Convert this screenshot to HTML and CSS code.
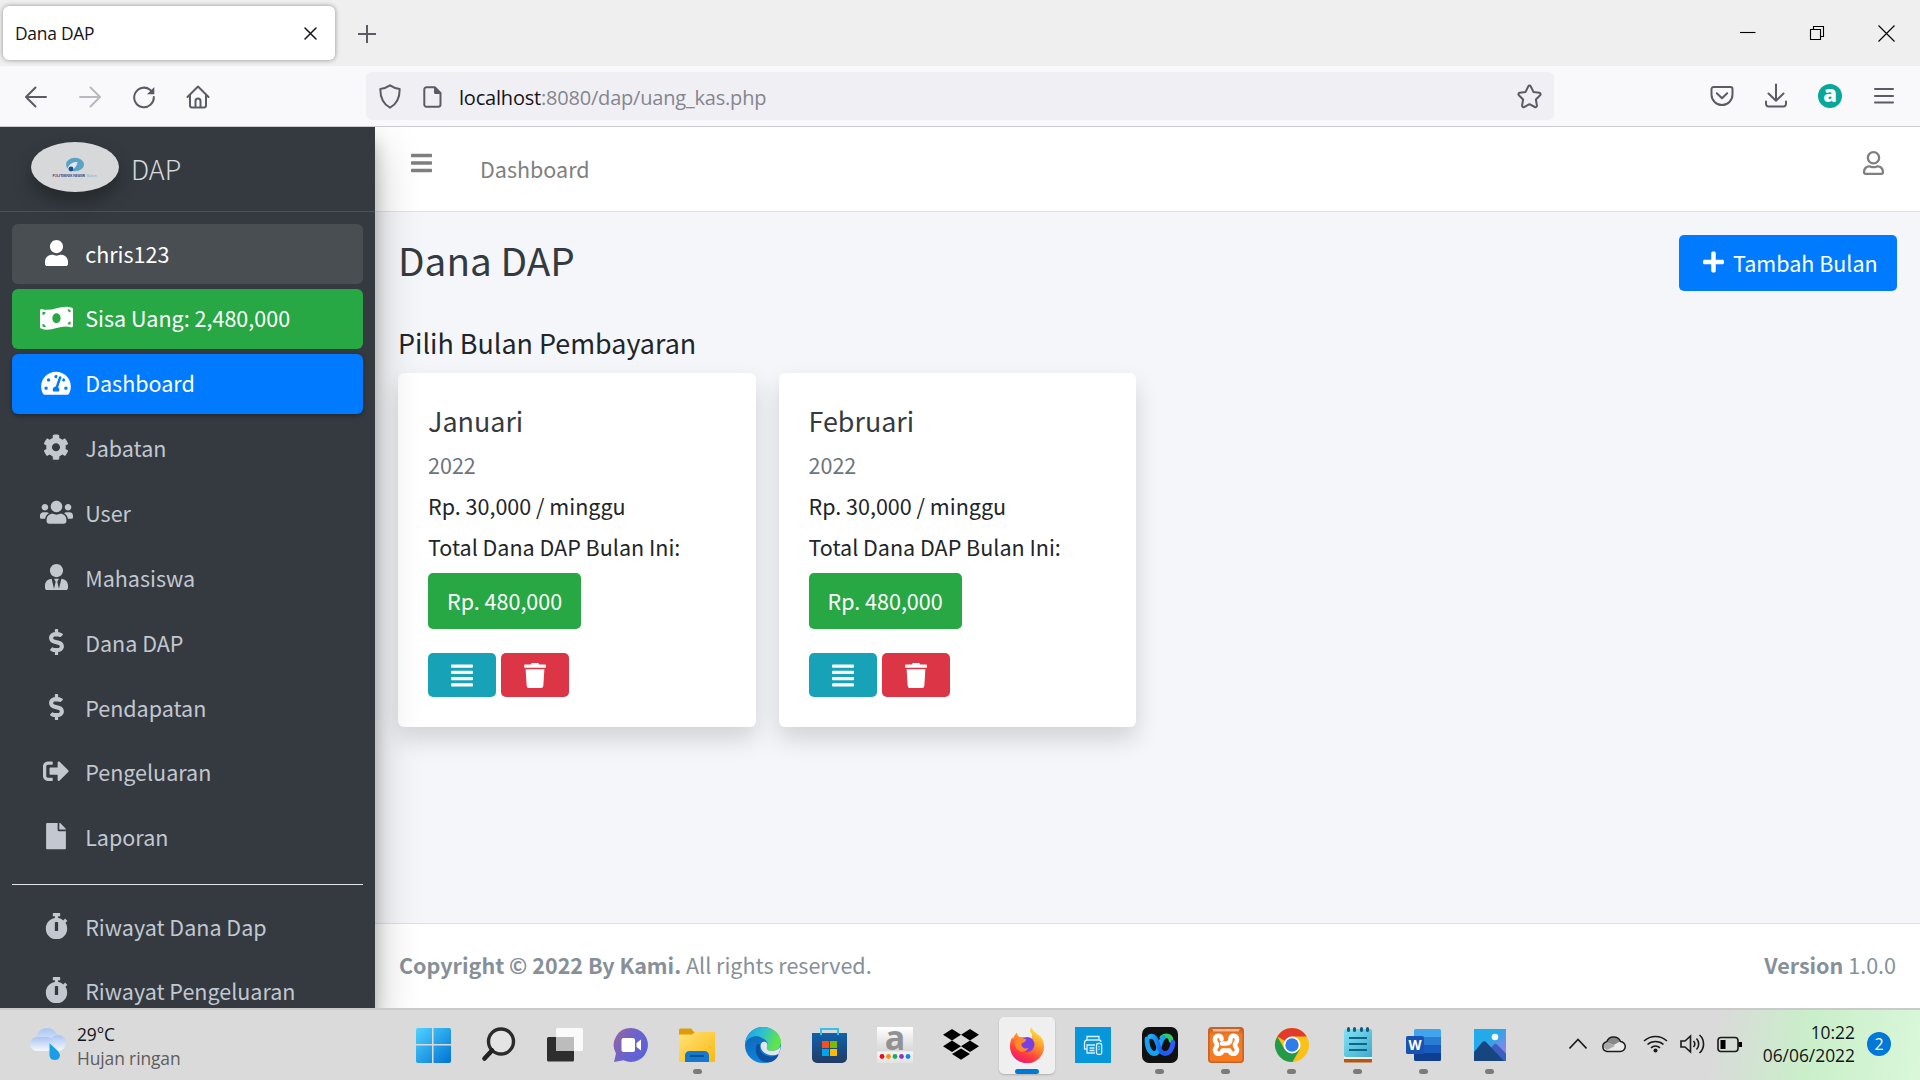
FILE: index.html
```html
<!DOCTYPE html>
<html lang="id">
<head>
<meta charset="utf-8">
<title>Dana DAP</title>
<link rel="stylesheet" href="styles.css">
</head>
<body>
<svg class="defs" aria-hidden="true">
  <defs>
    <symbol id="i-user" viewBox="0 0 448 512"><path d="M224 256c70.7 0 128-57.3 128-128S294.7 0 224 0 96 57.3 96 128s57.3 128 128 128zm89.6 32h-16.7c-22.2 10.2-46.9 16-72.9 16s-50.6-5.8-72.9-16h-16.7C60.2 288 0 348.2 0 422.4V464c0 26.5 21.5 48 48 48h352c26.5 0 48-21.5 48-48v-41.6c0-74.2-60.2-134.4-134.4-134.4z"/></symbol>
    <symbol id="i-money" viewBox="0 0 640 512"><path d="M621.16 54.46C582.37 38.19 543.55 32 504.75 32c-123.17-.01-246.33 62.34-369.5 62.34-30.89 0-61.76-3.92-92.65-13.72-3.47-1.1-6.95-1.62-10.35-1.62C15.04 79 0 92.32 0 110.81v317.26c0 12.63 7.23 24.6 18.84 29.46C57.63 473.81 96.45 480 135.25 480c123.17 0 246.34-62.35 369.51-62.35 30.89 0 61.76 3.92 92.65 13.72 3.47 1.1 6.95 1.62 10.35 1.62 17.21 0 32.25-13.32 32.25-31.81V83.93c-.01-12.64-7.24-24.6-18.85-29.47zM48 132.22c20.12 5.04 41.12 7.57 62.72 8.93C104.84 170.54 79 192.69 48 192.69v-60.47zm0 285v-47.78c34.37 0 62.18 27.27 63.71 61.4-22.53-1.81-43.59-6.31-63.71-13.62zM320 352c-44.19 0-80-42.99-80-96 0-53.02 35.82-96 80-96s80 42.98 80 96c0 53.03-35.83 96-80 96zm272 27.78c-17.52-4.39-35.71-6.85-54.32-8.44 5.87-26.08 27.5-45.88 54.32-49.28v57.72zm0-236.11c-30.89-3.91-54.86-29.7-55.81-61.55 19.54 2.17 38.09 6.23 55.81 12.66v48.89z"/></symbol>
    <symbol id="i-gauge" viewBox="0 0 576 512"><path d="M288 32C128.94 32 0 160.94 0 320c0 52.8 14.25 102.26 39.06 144.8 5.61 9.62 16.3 15.2 27.44 15.2h443c11.14 0 21.83-5.58 27.44-15.2C561.75 422.26 576 372.8 576 320c0-159.06-128.94-288-288-288zm0 64c14.71 0 26.58 10.13 30.32 23.65-1.11 2.26-2.64 4.23-3.45 6.67l-9.22 27.67c-5.13 3.49-10.97 6.01-17.64 6.01-17.67 0-32-14.33-32-32S270.33 96 288 96zM96 384c-17.67 0-32-14.33-32-32s14.33-32 32-32 32 14.33 32 32-14.33 32-32 32zm48-160c-17.67 0-32-14.33-32-32s14.33-32 32-32 32 14.33 32 32-14.33 32-32 32zm246.77-72.41l-61.33 184C343.13 347.33 352 364.54 352 384c0 11.72-3.38 22.55-8.88 32H232.88c-5.5-9.45-8.88-20.28-8.88-32 0-33.94 26.5-61.43 59.9-63.59l61.34-184.01c4.17-12.56 17.73-19.45 30.36-15.17 12.57 4.19 19.35 17.79 15.17 30.36zm14.66 57.2l15.52-46.55c3.47-1.29 7.13-2.23 11.05-2.23 17.67 0 32 14.33 32 32s-14.33 32-32 32c-11.38-.01-20.89-6.28-26.57-15.22zM480 384c-17.67 0-32-14.33-32-32s14.33-32 32-32 32 14.33 32 32-14.33 32-32 32z"/></symbol>
    <symbol id="i-cog" viewBox="0 0 512 512"><path d="M487.4 315.7l-42.6-24.6c4.3-23.2 4.3-47 0-70.2l42.6-24.6c4.9-2.8 7.1-8.6 5.5-14-11.1-35.6-30-67.8-54.7-94.6-3.8-4.1-10-5.1-14.8-2.3L380.8 110c-17.9-15.4-38.5-27.3-60.8-35.1V25.8c0-5.6-3.9-10.5-9.4-11.7-36.7-8.2-74.3-7.8-109.2 0-5.5 1.2-9.4 6.1-9.4 11.7V75c-22.2 7.9-42.8 19.8-60.8 35.1L88.7 85.5c-4.9-2.8-11-1.9-14.8 2.3-24.7 26.7-43.6 58.9-54.7 94.6-1.7 5.4.6 11.2 5.5 14L67.3 221c-4.3 23.2-4.3 47 0 70.2l-42.6 24.6c-4.9 2.8-7.1 8.6-5.5 14 11.1 35.6 30 67.8 54.7 94.6 3.8 4.1 10 5.1 14.8 2.3l42.6-24.6c17.9 15.4 38.5 27.3 60.8 35.1v49.2c0 5.6 3.9 10.5 9.4 11.7 36.7 8.2 74.3 7.8 109.2 0 5.5-1.2 9.4-6.1 9.4-11.7v-49.2c22.2-7.9 42.8-19.8 60.8-35.1l42.6 24.6c4.9 2.8 11 1.9 14.8-2.3 24.7-26.7 43.6-58.9 54.7-94.6 1.5-5.5-.7-11.3-5.6-14.1zM256 336c-44.1 0-80-35.9-80-80s35.9-80 80-80 80 35.9 80 80-35.9 80-80 80z"/></symbol>
    <symbol id="i-users" viewBox="0 0 640 512"><path d="M96 224c35.3 0 64-28.7 64-64s-28.7-64-64-64-64 28.7-64 64 28.7 64 64 64zm448 0c35.3 0 64-28.7 64-64s-28.7-64-64-64-64 28.7-64 64 28.7 64 64 64zm32 32h-64c-17.6 0-33.5 7.1-45.1 18.6 40.3 22.1 68.9 62 75.1 109.4h66c17.7 0 32-14.3 32-32v-32c0-35.3-28.7-64-64-64zm-256 0c61.9 0 112-50.1 112-112S381.9 32 320 32 208 82.1 208 144s50.1 112 112 112zm76.8 32h-8.3c-20.8 10-43.9 16-68.5 16s-47.6-6-68.5-16h-8.3C179.6 288 128 339.6 128 403.2V432c0 26.5 21.5 48 48 48h288c26.5 0 48-21.5 48-48v-28.8c0-63.6-51.6-115.2-115.2-115.2zm-223.7-13.4C161.5 263.1 145.6 256 128 256H64c-35.3 0-64 28.7-64 64v32c0 17.7 14.3 32 32 32h65.9c6.3-47.4 34.9-87.3 75.2-109.4z"/></symbol>
    <symbol id="i-tie" viewBox="0 0 448 512"><path d="M224 256c70.7 0 128-57.3 128-128S294.7 0 224 0 96 57.3 96 128s57.3 128 128 128zm95.8 32.6L272 480l-32-136 32-56h-96l32 56-32 136-47.8-191.4C56.9 292 0 350.3 0 422.4V464c0 26.5 21.5 48 48 48h352c26.5 0 48-21.5 48-48v-41.6c0-72.1-56.9-130.4-128.2-133.8z"/></symbol>
    <symbol id="i-dollar" viewBox="0 0 288 512"><path d="M209.2 233.4l-108-31.6C88.7 198.2 80 186.5 80 173.5c0-16.3 13.2-29.5 29.5-29.5h66.3c12.2 0 24.2 3.7 34.2 10.5 6.1 4.1 14.3 3.1 19.5-2l34.8-34c7.1-6.9 6.1-18.4-1.8-24.5C238 74.8 207.4 64.1 176 64V16c0-8.8-7.2-16-16-16h-32c-8.8 0-16 7.2-16 16v48h-2.5C45.8 64-5.4 118.7.5 183.6c4.2 46.1 39.4 83.6 83.8 96.6l102.5 30c12.5 3.7 21.2 15.3 21.2 28.3 0 16.3-13.2 29.5-29.5 29.5h-66.3C100 368 88 364.3 78 357.5c-6.1-4.1-14.3-3.1-19.5 2l-34.8 34c-7.1 6.9-6.1 18.4 1.8 24.5 24.5 19.2 55.1 29.9 86.5 30v48c0 8.8 7.2 16 16 16h32c8.8 0 16-7.2 16-16v-48.2c46.6-.9 90.3-28.6 105.7-72.7 21.5-61.6-14.6-124.8-72.5-141.7z"/></symbol>
    <symbol id="i-out" viewBox="0 0 512 512"><path d="M497 273L329 441c-15 15-41 4.5-41-17v-96H152c-13.3 0-24-10.7-24-24v-96c0-13.3 10.7-24 24-24h136V88c0-21.4 25.9-32 41-17l168 168c9.3 9.4 9.3 24.6 0 34zM192 436v-40c0-6.6-5.4-12-12-12H96c-17.7 0-32-14.3-32-32V160c0-17.7 14.3-32 32-32h84c6.6 0 12-5.4 12-12V76c0-6.6-5.4-12-12-12H96c-53 0-96 43-96 96v192c0 53 43 96 96 96h84c6.6 0 12-5.4 12-12z"/></symbol>
    <symbol id="i-file" viewBox="0 0 384 512"><path d="M224 136V0H24C10.7 0 0 10.7 0 24v464c0 13.3 10.7 24 24 24h336c13.3 0 24-10.7 24-24V160H248c-13.2 0-24-10.8-24-24zm160-14.1v6.1H256V0h6.1c6.4 0 12.5 2.5 17 7l97.9 98c4.5 4.5 7 10.6 7 16.9z"/></symbol>
    <symbol id="i-watch" viewBox="0 0 448 512"><path d="M432 304c0 114.9-93.1 208-208 208S16 418.9 16 304c0-104 76.3-190.2 176-205.5V64h-28c-6.6 0-12-5.4-12-12V12c0-6.6 5.4-12 12-12h120c6.6 0 12 5.4 12 12v40c0 6.6-5.4 12-12 12h-28v34.5c37.5 5.8 71.7 21.6 99.7 44.6l27.5-27.5c4.7-4.7 12.3-4.7 17 0l28.3 28.3c4.7 4.7 4.7 12.3 0 17l-29.4 29.4-.6.6C419.7 223.3 432 262.2 432 304zm-176 36V188.500c0-6.600-5.400-12-12-12h-40c-6.600 0-12 5.400-12 12V340c0 6.600 5.400 12 12 12h40c6.600 0 12-5.400 12-12z"/></symbol>
    <symbol id="i-plus" viewBox="0 0 448 512"><path d="M416 208H272V64c0-17.67-14.33-32-32-32h-32c-17.67 0-32 14.33-32 32v144H32c-17.67 0-32 14.33-32 32v32c0 17.67 14.33 32 32 32h144v144c0 17.67 14.33 32 32 32h32c17.67 0 32-14.33 32-32V304h144c17.67 0 32-14.33 32-32v-32c0-17.67-14.33-32-32-32z"/></symbol>
    <symbol id="i-lines" viewBox="0 0 448 512"><rect y="32" width="448" height="64" rx="16"/><rect y="160" width="448" height="64" rx="16"/><rect y="288" width="448" height="64" rx="16"/><rect y="416" width="448" height="64" rx="16"/></symbol>
    <symbol id="i-trash" viewBox="0 0 448 512"><path d="M432 32H312l-9.4-18.7A24 24 0 0 0 281.1 0H166.8a23.72 23.72 0 0 0-21.4 13.3L136 32H16A16 16 0 0 0 0 48v32a16 16 0 0 0 16 16h416a16 16 0 0 0 16-16V48a16 16 0 0 0-16-16zM53.2 467a48 48 0 0 0 47.9 45h245.8a48 48 0 0 0 47.9-45L416 128H32z"/></symbol>
    <symbol id="i-bars" viewBox="0 0 448 512"><rect y="60" width="448" height="72" rx="16"/><rect y="220" width="448" height="72" rx="16"/><rect y="380" width="448" height="72" rx="16"/></symbol>
    <symbol id="i-user-o" viewBox="0 0 448 512"><path d="M313.6 304c-28.7 0-42.5 16-89.6 16-47.1 0-60.8-16-89.6-16C60.2 304 0 364.2 0 438.4V464c0 26.5 21.5 48 48 48h352c26.5 0 48-21.5 48-48v-25.6c0-74.2-60.2-134.4-134.4-134.4zM400 464H48v-25.6c0-47.6 38.8-86.4 86.4-86.4 14.6 0 38.3 16 89.6 16 51.7 0 74.9-16 89.6-16 47.6 0 86.4 38.8 86.4 86.4V464zM224 288c79.5 0 144-64.5 144-144S303.5 0 224 0 80 64.5 80 144s64.5 144 144 144zm0-240c52.9 0 96 43.1 96 96s-43.1 96-96 96-96-43.1-96-96 43.1-96 96-96z"/></symbol>
    <linearGradient id="g-win" x1="0" y1="0" x2="1" y2="1"><stop offset="0" stop-color="#4fd3ff"/><stop offset="1" stop-color="#0072d4"/></linearGradient>
    <linearGradient id="g-chat" x1="0" y1=".2" x2="1" y2=".8"><stop offset="0" stop-color="#9263a3"/><stop offset=".5" stop-color="#6a63cf"/><stop offset="1" stop-color="#5a62d8"/></linearGradient>
    <linearGradient id="g-folder" x1="0" y1="0" x2="1" y2="1"><stop offset="0" stop-color="#ffe27a"/><stop offset="1" stop-color="#fcb90f"/></linearGradient>
    <linearGradient id="g-edge" x1="0" y1="0" x2="1" y2=".3"><stop offset="0" stop-color="#1e9ce8"/><stop offset=".5" stop-color="#2bc0d4"/><stop offset="1" stop-color="#62e545"/></linearGradient>
    <linearGradient id="g-edge2" x1="0" y1="0" x2=".4" y2="1"><stop offset="0" stop-color="#125fae"/><stop offset="1" stop-color="#0b86e0"/></linearGradient>
    <linearGradient id="g-store" x1="0" y1="0" x2="0" y2="1"><stop offset="0" stop-color="#0f62ac"/><stop offset="1" stop-color="#233a63"/></linearGradient>
    <linearGradient id="g-fox" x1=".8" y1="0" x2=".3" y2="1"><stop offset="0" stop-color="#fff04a"/><stop offset=".4" stop-color="#ff9a2a"/><stop offset=".75" stop-color="#ff3c3f"/><stop offset="1" stop-color="#e8187d"/></linearGradient>
    <linearGradient id="g-webex" x1="0" y1="0" x2="1" y2="0"><stop offset="0" stop-color="#18b5f5"/><stop offset=".5" stop-color="#1f5bf0"/><stop offset="1" stop-color="#2a5bff"/></linearGradient>
    <linearGradient id="g-note" x1="0" y1="0" x2="1" y2="1"><stop offset="0" stop-color="#83e3f5"/><stop offset="1" stop-color="#3eaaca"/></linearGradient>
    <linearGradient id="g-photo" x1="0" y1="0" x2="1" y2="1"><stop offset=".4" stop-color="#23aaea"/><stop offset=".8" stop-color="#8b83e6"/></linearGradient>
    <linearGradient id="g-xampp" x1="0" y1="0" x2="0" y2="1"><stop offset="0" stop-color="#c05a1c"/><stop offset=".2" stop-color="#f27a26"/><stop offset="1" stop-color="#f87a1e"/></linearGradient>
    <linearGradient id="g-cloud" x1="0" y1="0" x2="0" y2="1"><stop offset="0" stop-color="#a9c5f2"/><stop offset="1" stop-color="#f4f8fd"/></linearGradient>
    <linearGradient id="g-amz" x1="0" y1="0" x2="0" y2="1"><stop offset="0" stop-color="#fff"/><stop offset=".65" stop-color="#d8d8d8"/><stop offset=".7" stop-color="#f3f3f3"/><stop offset="1" stop-color="#e2e2e2"/></linearGradient>
  </defs>
</svg>

<header class="tabstrip">
  <div class="tab">
    <span>Dana DAP</span>
    <svg width="13" height="13" viewBox="0 0 13 13" class="stroke dark"><path d="M1 1l11 11M12 1L1 12"/></svg>
  </div>
  <svg class="newtab stroke" width="18" height="18" viewBox="0 0 18 18"><path d="M9 0v18M0 9h18"/></svg>
  <div class="winctl">
    <svg width="16" height="16" viewBox="0 0 16 16"><path d="M0 7.500h15.500"/></svg>
    <svg width="16" height="16" viewBox="0 0 16 16"><path d="M1.500 4.500h10v10h-10zM4.500 4.500v-3h10v10h-3"/></svg>
    <svg width="17" height="17" viewBox="0 0 17 17"><path d="M.5.5l16 16M16.500.5l-16 16"/></svg>
  </div>
</header>

<nav class="toolbar">
  <div class="navbtns">
    <svg class="stroke" width="24" height="24" viewBox="0 0 24 24"><path d="M22 12H2.500M11.500 2.500L2 12l9.500 9.500"/></svg>
    <svg class="stroke faded" width="24" height="24" viewBox="0 0 24 24"><path d="M2 12h19.500M12.500 2.500L22 12l-9.500 9.500"/></svg>
    <svg class="stroke" width="24" height="24" viewBox="0 0 24 24"><path d="M21.800 12A9.800 9.800 0 1 1 18 4.700L20 7"/><path d="M22.300 2v7.300h-7.300z" fill="#5b5b66" stroke="none"/></svg>
    <svg class="stroke" width="24" height="24" viewBox="0 0 24 24"><path d="M1.500 12L12 1.500 22.500 12M4 10v10.500a2 2 0 0 0 2 2h12a2 2 0 0 0 2-2V10M9.500 22v-6a2.500 2.500 0 0 1 5 0v6"/></svg>
  </div>
  <div class="urlbar">
    <svg class="stroke" width="22" height="25" viewBox="0 0 22 25"><path d="M11 1.300c3 2 6 3.200 9.700 3.700 0 8-1.700 14.500-9.700 18.700C3 19.500 1.300 13 1.300 5 5 4.500 8 3.300 11 1.300z"/></svg>
    <svg class="stroke doc" width="19" height="22" viewBox="0 0 19 22"><path d="M3.500 1.200h8.300l5.700 5.700v11.400a2.500 2.500 0 0 1-2.500 2.500H3.500A2.200 2.200 0 0 1 1.300 18.500v-15A2.200 2.200 0 0 1 3.500 1.200z"/><path d="M11 1l7 7h-5.500A1.500 1.500 0 0 1 11 6.500z" fill="#5b5b66" stroke="none"/></svg>
    <span class="url"><b>localhost</b>:8080/dap/uang_kas.php</span>
    <svg class="stroke" width="25" height="25" viewBox="0 0 25 25"><path d="M12.500 1.600c.6 0 1 .3 1.300.9l2.600 5.400 5.900.9c1.300.2 1.700 1.600.8 2.500l-4.200 4.200 1 6c.2 1.300-1 2.100-2.100 1.500l-5.300-2.800L7.200 23c-1.100.6-2.300-.2-2.100-1.500l1-6-4.200-4.200c-.9-.9-.5-2.300.8-2.500l5.900-.9 2.600-5.400c.3-.6.7-.9 1.300-.9z"/></svg>
  </div>
  <div class="tools">
    <svg class="stroke" width="24" height="22" viewBox="0 0 24 22"><path d="M3.500 2h17a2 2 0 0 1 2 2v5.500a10.500 10.500 0 0 1-21 0V4a2 2 0 0 1 2-2zM6.800 8.300l5.200 5 5.200-5"/></svg>
    <svg class="stroke" width="24" height="26" viewBox="0 0 24 26"><path d="M12 1.500v16M4.500 10.500L12 17.800l7.500-7.300M2 18.500v2.500a2.500 2.500 0 0 0 2.500 2.500h15a2.500 2.500 0 0 0 2.500-2.500v-2.500"/></svg>
    <span class="ext">a</span>
    <svg class="stroke" width="20" height="18" viewBox="0 0 20 18"><path d="M1 2h18M1 9h18M1 15.500h18"/></svg>
  </div>
</nav>

<main class="page">
  <aside class="sidebar">
    <div class="brand">
      <svg class="logo" width="88" height="50" viewBox="0 0 88 50">
        <ellipse cx="44" cy="25" rx="44" ry="25" fill="#d7d8da"/>
        <ellipse cx="44" cy="22.500" rx="9" ry="6.700" fill="#5aa3c6"/>
        <path d="M37 25.500c1-3.500 5-5.500 9.500-5.500-.5 4-3.500 8-7.500 8.500z" fill="#dfe6ec"/><circle cx="40" cy="27" r="2.400" fill="#1f4c92"/>
        <text x="21.500" y="35" font-size="3.600" font-weight="700" fill="#27417f" textLength="33" lengthAdjust="spacingAndGlyphs">P<tspan fill="#d04040">O</tspan>LITEKNIK NEGERI</text>
        <text x="56" y="35" font-size="3.400" fill="#6fb6d4" textLength="10" lengthAdjust="spacingAndGlyphs">Batam</text>
      </svg>
      <span>DAP</span>
    </div>
    <ul class="menu">
      <li class="user"><i><svg style="width:23px"><use href="#i-user"/></svg></i><span>chris123</span></li>
      <li class="cash"><i><svg style="width:33px"><use href="#i-money"/></svg></i><span>Sisa Uang: 2,480,000</span></li>
      <li class="active"><i><svg style="width:30px"><use href="#i-gauge"/></svg></i><span>Dashboard</span></li>
      <li><i><svg style="width:26px"><use href="#i-cog"/></svg></i><span>Jabatan</span></li>
      <li><i><svg style="width:33px"><use href="#i-users"/></svg></i><span>User</span></li>
      <li><i><svg style="width:23px"><use href="#i-tie"/></svg></i><span>Mahasiswa</span></li>
      <li><i><svg style="width:15px"><use href="#i-dollar"/></svg></i><span>Dana DAP</span></li>
      <li><i><svg style="width:15px"><use href="#i-dollar"/></svg></i><span>Pendapatan</span></li>
      <li><i><svg style="width:26px"><use href="#i-out"/></svg></i><span>Pengeluaran</span></li>
      <li><i><svg style="width:20px"><use href="#i-file"/></svg></i><span>Laporan</span></li>
      <li class="rule"></li>
      <li><i><svg style="width:23px"><use href="#i-watch"/></svg></i><span>Riwayat Dana Dap</span></li>
      <li class="last"><i><svg style="width:23px"><use href="#i-watch"/></svg></i><span>Riwayat Pengeluaran</span></li>
    </ul>
  </aside>

  <div class="content">
    <div class="topnav">
      <svg class="burger"><use href="#i-bars"/></svg>
      <a>Dashboard</a>
      <svg class="profile"><use href="#i-user-o"/></svg>
    </div>
    <section class="body">
      <div class="headrow">
        <h1>Dana DAP</h1>
        <button class="btn add"><svg><use href="#i-plus"/></svg><span>Tambah Bulan</span></button>
      </div>
      <h5 class="sub">Pilih Bulan Pembayaran</h5>
      <div class="cards">
        <article class="card">
          <h5>Januari</h5>
          <h6 class="muted">2022</h6>
          <h6>Rp. 30,000 / minggu</h6>
          <h6>Total Dana DAP Bulan Ini:</h6>
          <button class="btn total"><span>Rp. 480,000</span></button>
          <div class="acts">
            <button class="sm info"><svg><use href="#i-lines"/></svg></button>
            <button class="sm danger"><svg><use href="#i-trash"/></svg></button>
          </div>
        </article>
        <article class="card">
          <h5>Februari</h5>
          <h6 class="muted">2022</h6>
          <h6>Rp. 30,000 / minggu</h6>
          <h6>Total Dana DAP Bulan Ini:</h6>
          <button class="btn total"><span>Rp. 480,000</span></button>
          <div class="acts">
            <button class="sm info"><svg><use href="#i-lines"/></svg></button>
            <button class="sm danger"><svg><use href="#i-trash"/></svg></button>
          </div>
        </article>
      </div>
    </section>
    <footer class="foot">
      <div><b>Copyright © 2022 By Kami.</b> All rights reserved.</div>
      <div><b>Version</b> 1.0.0</div>
    </footer>
  </div>
</main>

<footer class="taskbar">
  <div class="weather">
    <svg width="38" height="36" viewBox="0 0 38 36"><circle cx="18" cy="12" r="11" fill="url(#g-cloud)"/><circle cx="29" cy="16" r="8" fill="url(#g-cloud)"/><rect x="1" y="10" width="24" height="14" rx="7" fill="url(#g-cloud)"/><path d="M20.500 16c2 3 10.500 8 10.500 12.500a5.300 5.300 0 0 1-10.500 0z" fill="#1a9fe6"/></svg>
    <div><p>29°C</p><p class="dim">Hujan ringan</p></div>
  </div>
  <div class="apps">
    <span><svg viewBox="0 0 36 36"><path d="M1 3a2 2 0 0 1 2-2h14v16H1zM18.500 1H34a2 2 0 0 1 2 2v14H18.500zM1 18.500h16V36H3a2 2 0 0 1-2-2zM18.500 18.500H36V34a2 2 0 0 1-2 2H18.500z" fill="url(#g-win)"/></svg></span>
    <span><svg viewBox="0 0 36 36"><circle cx="20" cy="14.500" r="12.500" fill="#e4e4e4" stroke="#2b2b2b" stroke-width="3.400"/><path d="M11 23.500L3.500 31.500" stroke="#222" stroke-width="4.600" stroke-linecap="round"/></svg></span>
    <span><svg viewBox="0 0 36 36"><rect x="0" y="10" width="27" height="24.500" rx="1.500" fill="#2e2e2e"/><rect x="9" y="1" width="27" height="23" rx="1.500" fill="#fafafa"/><path d="M9 10h18v14H9z" fill="#bcbcbc"/></svg></span>
    <span><svg viewBox="0 0 36 36"><path d="M18 1a17 17 0 1 1-7.500 32.300L1 35l2-8.500A17 17 0 0 1 18 1z" fill="url(#g-chat)"/><rect x="8.500" y="11" width="13.500" height="14" rx="2" fill="#fff"/><path d="M23.500 16l4.500-3.500v11L23.500 20z" fill="#fff"/></svg></span>
    <span class="run"><svg viewBox="0 0 36 36"><path d="M0 3a1.500 1.500 0 0 1 1.500-1.500H12l3 3.500h20a1 1 0 0 1 1 1v6H0z" fill="#dc9b07"/><path d="M0 7.500h13l3-2.500h20v28.500a1.500 1.500 0 0 1-1.500 1.500h-33A1.500 1.500 0 0 1 0 33.500z" fill="url(#g-folder)"/><path d="M6 35v-6.500a4.500 4.500 0 0 1 4.500-4.500h15a4.500 4.500 0 0 1 4.500 4.500V35z" fill="#1478cc"/><path d="M11 29h14" stroke="#0b4f96" stroke-width="2"/></svg></span>
    <span><svg viewBox="0 0 36 36"><circle cx="18" cy="18" r="18" fill="url(#g-edge2)"/><path d="M0 16.500C1.500 7 8.500 0 18 0c10 0 18 7 18 15 0 6-4.500 9-10 9-3.500 0-5.500-1.500-4-4 2.500-4.500-1.500-8-8-10.500C8 8.500 3 11 0 16.500z" fill="url(#g-edge)"/><path d="M12 17c-4 8 2 18.500 11 18.500 5 0 9.500-4 10.500-8-6 3.500-15 2.500-18-4-1-2-.5-4 .5-6z" fill="#0d50a0"/><path d="M22 20c-.8 2.800 1 4 4 4 4 0 7.500-1.500 9.500-4.500 0 3-1 5.500-2.200 7.500C27 30 16.500 27.500 15.500 19c0-3 2.500-5 5-4 2 .8 2.300 3 1.500 5z" fill="#e2e6ea"/></svg></span>
    <span><svg viewBox="0 0 36 36"><path d="M1 6h35v25a5 5 0 0 1-5 5H6a5 5 0 0 1-5-5z" fill="url(#g-store)"/><path d="M10 8V2h17v6" fill="none" stroke="#37c0ee" stroke-width="2"/><path d="M11 14h7v7h-7z" fill="#f25022"/><path d="M19 14h7v7h-7z" fill="#7fba00"/><path d="M11 22h7v7h-7z" fill="#00a4ef"/><path d="M19 22h7v7h-7z" fill="#ffb900"/></svg></span>
    <span><svg viewBox="0 0 36 36"><path d="M0 0h36v36H0z" fill="url(#g-amz)"/><text x="18" y="23" text-anchor="middle" class="glyph" font-size="34" fill="#929292">a</text><circle cx="5" cy="29.500" r="2.400" fill="#e8101c"/><circle cx="11.500" cy="29.500" r="2.400" fill="#f5921e"/><circle cx="18" cy="29.500" r="2.400" fill="#18ae58"/><circle cx="24.500" cy="29.500" r="2.400" fill="#8a35c8"/><circle cx="31" cy="29.500" r="2.400" fill="#1588e0"/></svg></span>
    <span><svg viewBox="0 0 36 36"><path d="M9 2l9 5.700-9 5.700-9-5.700zM27 2l9 5.700-9 5.700-9-5.700zM9 13.500l9 5.700-9 5.700-9-5.700zM27 13.500l9 5.700-9 5.700-9-5.700zM18 21.500l9 5.500-9 5.800L9 27z"/></svg></span>
    <span class="focus"><svg viewBox="0 0 36 36"><path d="M22.500 0c1 4 5 6 8.500 9 3 3 4 7 4 10.500A17 16.500 0 0 1 1 20c0-4 .5-7 2.500-10l.5 2.500C4.500 10 6 7 8 5.500c0 2 1 4 2.500 4.500h5c-1 1.500-2 3 0 4.500l4-2c4 0 5-5 1.500-8 0-2 .5-3.500 1.500-4.500z" fill="url(#g-fox)"/><circle cx="18" cy="17.500" r="7.500" fill="#7a3fe0"/><path d="M6 14c3-4 8-3.500 11.500-1.500-1.500 3-4 3.500-5 4-.5 4 3 6 7 4.500-2 4.500-9 5-12 .5C6 19 5.500 16.500 6 14z" fill="#ff8a2a"/></svg></span>
    <span><svg viewBox="0 0 36 36"><path d="M0 0h36v36H0z" fill="#0796d9"/><path d="M12 13v-3.500h12V13M11.500 22H9.500v-6c0-2 1-3 3-3H24c1.500 0 2 .8 2 2M20 18h-8v8h8M14.500 21h5M14.500 23.500h5" fill="none" stroke="#d9effa" stroke-width="1.300"/><rect x="21.500" y="16.500" width="5.200" height="10.800" rx="1.500" fill="none" stroke="#d9effa" stroke-width="1.300"/><path d="M24 19v5" stroke="#d9effa" stroke-dasharray="1.500 1"/></svg></span>
    <span class="run"><svg viewBox="0 0 36 36"><rect width="36" height="36" rx="7" fill="#111"/><path d="M20 10.500c3-2.500 9-2.500 9 3" fill="none" stroke="#35c964" stroke-width="4.800" stroke-linecap="round"/><path d="M5 12c0 10 3.500 14.500 7.500 14.500 5.500 0 4-12 9-16" fill="none" stroke="#15a1f2" stroke-width="4.800" stroke-linecap="round"/><path d="M8 9.500c3.500-1 6 2 7.500 7 1.500 6 4 10 7.500 10 4.500 0 7.500-5 8-11" fill="none" stroke="url(#g-webex)" stroke-width="4.800" stroke-linecap="round"/></svg></span>
    <span class="run"><svg viewBox="0 0 36 36"><rect x=".8" y=".8" width="34.400" height="34.400" rx="3" fill="url(#g-xampp)" stroke="#c46428" stroke-width="1.600"/><path d="M4 2h28l-1.500 2.500h-25z" fill="#f5b890"/><path d="M13.500 12c0-4.500-6.500-4.500-6.500.5 0 3 2 3.500 2 5.500s-2 3-2 5c0 5 6.500 5 7.500.5h7c1 4.500 7.500 4.500 7.500-.5 0-2-2-3-2-5s2-2.500 2-5.500c0-5-6.500-5-6.500-.5 0 3-1.500 4.500-4.500 4.500h-4" fill="none" stroke="#fff" stroke-width="4.600" stroke-linecap="round" stroke-linejoin="round"/></svg></span>
    <span class="run"><svg viewBox="0 0 36 36"><circle cx="18" cy="18" r="17" fill="#fbc116"/><path d="M18 18L3.300 9.500A17 17 0 0 1 32.700 9.500H18z" fill="#e23b2e"/><path d="M3.300 9.500A17 17 0 0 0 18.500 35l7.200-12.500L18 18 10.500 22z" fill="#229a48"/><circle cx="18" cy="18" r="8.500" fill="#fff"/><circle cx="18" cy="18" r="6.700" fill="#2f7de9"/></svg></span>
    <span class="run"><svg viewBox="0 0 36 36"><path d="M4 31h28v3.500a1 1 0 0 1-1 1H5a1 1 0 0 1-1-1z" fill="#b5570f"/><path d="M4 29h28v3H4z" fill="#f1f1f1"/><path d="M4 4a2 2 0 0 1 2-2h24a2 2 0 0 1 2 2v26H6a2 2 0 0 1-2-2z" fill="url(#g-note)"/><path d="M9 11h18M9 17h18M9 23h18" stroke="#0b6587" stroke-width="2"/><path d="M8.500 1.500v2M14.500 1.500v2M21.500 1.500v2M27.500 1.500v2" stroke="#0d5d80" stroke-width="3" stroke-linecap="round"/></svg></span>
    <span class="run"><svg viewBox="0 0 36 36"><path d="M8 3.500A1.500 1.500 0 0 1 9.500 2h24A1.500 1.500 0 0 1 35 3.500V10H8z" fill="#41a5ee"/><path d="M8 10h27v8H8z" fill="#2b7cd3"/><path d="M8 18h27v8H8z" fill="#185abd"/><path d="M8 26h27v6.500a1.500 1.500 0 0 1-1.500 1.500h-24A1.500 1.500 0 0 1 8 32.500z" fill="#103f91"/><rect y="9" width="18" height="18" rx="1.500" fill="#1853b4"/><text x="9" y="22.800" text-anchor="middle" class="glyph" font-size="13.500" fill="#fff">W</text></svg></span>
    <span class="run"><svg viewBox="0 0 36 36"><path d="M2 2h32v32H2z" fill="url(#g-photo)"/><path d="M16 24l6-6.500c1-1 2-1 3 0l9 9V34H20z" fill="#3a5fc0"/><path d="M2 25l8-9.500c1.500-1.700 3-1.700 4.500 0L32 34H2z" fill="#17457f"/><circle cx="23" cy="10" r="3.300" fill="#f4fbff"/></svg></span>
  </div>
  <div class="tray">
    <svg class="chev" width="18" height="12" viewBox="0 0 18 12"><path d="M.5 10.500L9 1.500l8.500 9" class="thin"/></svg>
    <svg class="cloud" width="25" height="18" viewBox="0 0 25 18"><path d="M6 16.500a5 5 0 0 1-.3-9.800A7.500 7.500 0 0 1 19.500 6.500a5 5 0 0 1-.5 10z" fill="#e9e9e9"/><path d="M5.500 7A7.500 7.500 0 0 1 19 6.500L12.500 10z" fill="#888"/><path d="M1.800 12C2 9 4 7.500 7 7.500l7 3.500-8 4z" fill="#aaa"/><path d="M6 16.500a5 5 0 0 1-.3-9.800A7.500 7.500 0 0 1 19.500 6.500a5 5 0 0 1-.5 10z" fill="none" stroke="#1a1a1a" stroke-width="1.500"/></svg>
    <svg width="25" height="18" viewBox="0 0 25 18"><path d="M1 6a17 17 0 0 1 23 0M4.500 9.500a12 12 0 0 1 16 0M8 12.800a7 7 0 0 1 9 0" class="thin"/><circle cx="12.500" cy="15.500" r="2" fill="#1a1a1a"/></svg>
    <svg width="25" height="20" viewBox="0 0 25 20"><path d="M1 7h4l5.500-5v16L5 13H1zM13.500 7a4.500 4.500 0 0 1 0 6M16.500 4.500a8 8 0 0 1 0 11M19.500 1a12 12 0 0 1 0 18" class="thin"/></svg>
    <svg width="25" height="17" viewBox="0 0 25 17"><rect x="1" y="1.500" width="20" height="14" rx="3" class="thin"/><path d="M3.500 4h5v9h-5zM21.500 6H25v5h-3.500z"/></svg>
    <div class="clock"><p>10:22</p><p>06/06/2022</p></div>
    <span class="count">2</span>
  </div>
</footer>
</body>
</html>
```
FILE: styles.css
```css
* { box-sizing: border-box; }
html, body { margin: 0; height: 100%; }
body {
  width: 1920px;
  height: 1080px;
  overflow: hidden;
  display: flex;
  flex-direction: column;
  font: 17.400px "Open Sans", sans-serif;
  color: #15141a;
}
h1, h5, h6, p, ul { margin: 0; padding: 0; font-weight: 400; }
svg { display: block; flex: none; }
.defs { position: absolute; width: 0; height: 0; }
.stroke { fill: none; stroke: #5b5b66; stroke-width: 2; stroke-linecap: round; stroke-linejoin: round; }
.stroke.dark { stroke: #15141a; stroke-width: 1.500; }
.faded { opacity: .4; }

/* browser chrome */
.tabstrip { height: 66px; background: #efefef; display: flex; align-items: center; padding-left: 3px; }
.tab {
  width: 332px; height: 54px; background: #fff; border-radius: 6px;
  box-shadow: 0 0 5px rgba(0,0,0,.4);
  display: flex; align-items: center; justify-content: space-between; padding: 0 18px 0 12px;
  letter-spacing: -.250px;
}
.newtab { margin-left: 23px; margin-top: 2px; }
.winctl { margin-left: auto; display: flex; gap: 53px; padding-right: 25px; }
.winctl svg { fill: none; stroke: #000; stroke-width: 1.100; }
.toolbar { height: 61px; background: #f9f9fb; border-bottom: 1px solid #ccccd0; display: flex; align-items: center; padding: 0 26px 0 24px; }
.navbtns { display: flex; gap: 30px; width: 342px; padding-top: 1px; }
.urlbar { width: 1188px; height: 48px; border-radius: 6px; background: #f0f0f4; display: flex; align-items: center; padding: 1px 12px 0 13px; }
.doc { margin-left: 22px; }
.url { margin: 2px 0 0 17px; flex: 1; font-size: 20px; letter-spacing: -.200px; color: #85858e; }
.url b { font-weight: 400; color: #15141a; }
.tools { margin-left: auto; display: flex; align-items: center; gap: 30px; }
.ext { width: 24px; height: 24px; border-radius: 50%; background: #07a79a; color: #fff; font: 800 22px/19px "Open Sans", sans-serif; text-align: center; }
.tools .ext + svg { margin-left: 2px; }

/* page */
.page { height: 881px; display: flex; font: 21.520px/36px "Noto Sans CJK JP", sans-serif; color: #212529; overflow: hidden; }
.sidebar {
  width: 375px; flex: none; background: #343a40; color: #c2c7d0; z-index: 2;
  box-shadow: 0 21px 42px rgba(0,0,0,.25), 0 15px 15px rgba(0,0,0,.22);
}
.brand { height: 85px; border-bottom: 1px solid #4b545c; display: flex; padding: 15px 0 0 31px; }
.brand span { font-weight: 300; font-size: 27px; line-height: 50px; margin: 2px 0 0 12px; color: #d6d8db; }
.logo { filter: drop-shadow(0 10px 9px rgba(0,0,0,.3)); }
.logo text { font-family: "Open Sans", sans-serif; }
.menu { list-style: none; padding: 12px 12px 0; display: flex; flex-direction: column; gap: 4.800px; }
.menu li { height: 60px; flex: none; border-radius: 6px; display: flex; align-items: flex-start; padding-left: 25.300px; }
.menu i { width: 38.400px; margin-top: 16px; display: flex; justify-content: center; }
.menu svg { height: 26.400px; fill: currentColor; }
.menu span { margin: 12px 0 0 9.500px; }
.menu .user { background: #494e52; color: #fff; }
.menu .cash { background: #28a745; color: #fff; }
.menu .cash span, .menu .active span { margin-top: 11.500px; }
.menu .active { background: #007bff; color: #fff; box-shadow: 0 2px 4px rgba(0,0,0,.3); }
.menu .rule { height: 1px; margin: 12px 0 7px; background: #e4e5e6; border-radius: 0; }
.menu .last { margin-top: -1px; }

.content { flex: 1; display: flex; flex-direction: column; background: #f4f6f9; min-width: 0; }
.topnav { height: 85px; background: #fff; border-bottom: 1px solid #dee2e6; display: flex; padding: 0 36px; color: #7f7f7f; }
.topnav a { margin: 24px auto 0 48px; }
.topnav svg { width: 21px; height: 24px; fill: #7f7f7f; margin-top: 24px; }
.body { flex: 1; padding: 23px 23px 0 23px; }
.headrow { display: flex; justify-content: space-between; height: 56px; }
h1 { font-size: 38.700px; line-height: 48px; color: #343a40; }
.btn { border: 0; border-radius: 5px; height: 56px; padding: 0 19px; font: inherit; color: #fff; display: flex; align-items: center; white-space: nowrap; }
.add { background: #007bff; width: 218px; padding-left: 24px; gap: 9px; }
.add svg { width: 21px; height: 24px; fill: #fff; margin-bottom: 2px; }
.sub { font-size: 26.900px; line-height: 36px; margin: 34px 0 12px 0; }
.cards { display: flex; gap: 23px; }
.card { width: 357.500px; height: 354px; background: #fff; border-radius: 6px; padding: 30px; box-shadow: 0 12px 24px rgba(0,0,0,.15); }
.card h5 { font-size: 26.900px; line-height: 36px; margin-bottom: 12px; color: #343a40; }
.card h6 { font-size: 21.520px; line-height: 28.800px; margin-bottom: 12px; }
.card .muted { color: #6c757d; }
.total { background: #28a745; width: 153px; }
.acts { display: flex; gap: 5px; margin-top: 24px; }
.sm { border: 0; width: 68px; height: 44px; border-radius: 5px; display: flex; align-items: center; justify-content: center; padding: 0; }
.sm svg { width: 22px; height: 25px; fill: #fff; }
.info { background: #17a2b8; }
.danger { background: #dc3545; }
.foot { height: 85px; background: #fff; border-top: 1px solid #dee2e6; padding: 23px 24px; display: flex; justify-content: space-between; color: #869099; }

/* taskbar */
.taskbar {
  height: 72px; border-top: 2px solid #cacaca; display: grid; grid-template-columns: 400px 1123px 1fr;
  background: linear-gradient(100deg, transparent 89%, #c9efc9 94%, #daf7da 100%), #dadada;
}
.weather { display: flex; padding: 12px 0 0 29px; gap: 10px; line-height: 24px; letter-spacing: -.1px; }
.weather svg { margin-top: 5px; }
.dim { color: #5d5d5d; }
.apps { display: flex; height: 70px; padding-top: 7px; }
.apps span { width: 66.060px; height: 57px; display: flex; justify-content: center; padding-top: 10px; position: relative; }
.apps svg { width: 36px; height: 36px; }
.run::after, .focus::after { content: ""; position: absolute; bottom: 0; width: 9px; height: 5px; border-radius: 3px; background: #7b7b7b; }
.apps .focus { width: 56px; margin: 0 5.030px; background: #efefef; border-radius: 5px; box-shadow: 0 1px 2px rgba(0,0,0,.2); }
.focus::after { width: 24px; background: #0078d7; }
.glyph { font-family: "Open Sans", sans-serif; font-weight: 700; }
.tray { display: flex; align-items: center; padding: 0 29px 2px 46px; }
.tray > svg { margin-right: 12px; }
.tray > .chev { margin-right: 14px; }
.tray > .cloud { margin-right: 17px; }
.thin { fill: none; stroke: #1a1a1a; stroke-width: 1.600; }
.clock { margin-left: auto; text-align: right; line-height: 23px; }
.count { width: 24px; height: 24px; margin-left: 12px; border-radius: 50%; background: #0078d7; color: #fff; font-size: 16px; line-height: 24px; text-align: center; }
```
